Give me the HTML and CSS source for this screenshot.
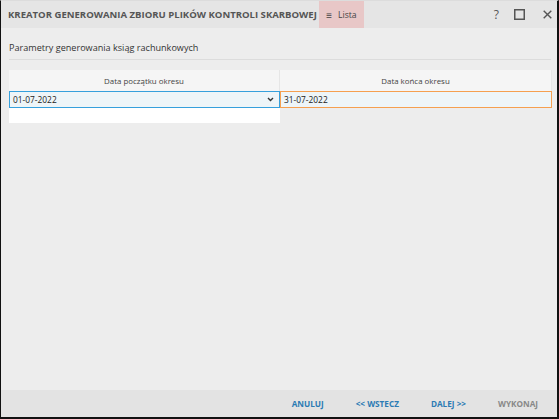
FILE: index.html
```html
<!DOCTYPE html>
<html lang="pl">
<head>
<meta charset="utf-8">
<link rel="stylesheet" href="styles.css">
</head>
<body>
<div class="window">
  <header class="titlebar">
    <div class="title">KREATOR GENEROWANIA ZBIORU PLIKÓW KONTROLI SKARBOWEJ</div>
    <div class="lista"><span class="burger">≡</span>Lista</div>
    <div class="spacer"></div>
    <div class="tools">
      <span class="help">?</span>
      <svg class="ico ico-max" width="11" height="11" viewBox="0 0 11 11"><rect x="0.75" y="0.75" width="9.5" height="9.5" fill="none" stroke="#555" stroke-width="1.5"/></svg>
      <svg class="ico ico-close" width="9" height="9" viewBox="0 0 9 9"><path d="M0.7 0.7L8.3 8.3M8.3 0.7L0.7 8.3" stroke="#555" stroke-width="1.4" fill="none"/></svg>
    </div>
  </header>
  <main class="content">
    <div class="section">Parametry generowania ksiąg rachunkowych</div>
    <div class="grid">
      <div class="head">Data początku okresu</div>
      <div class="head">Data końca okresu</div>
      <div class="cell cell-left"><span>01-07-2022</span>
        <svg width="7" height="5" viewBox="0 0 7 5"><path d="M1 1L3.5 3.5L6 1" stroke="#333" stroke-width="1.4" fill="none"/></svg>
      </div>
      <div class="cell cell-right"><span>31-07-2022</span></div>
      <div class="blank"></div>
    </div>
  </main>
  <footer class="footer">
    <span class="btn">ANULUJ</span>
    <span class="btn">&lt;&lt; WSTECZ</span>
    <span class="btn">DALEJ &gt;&gt;</span>
    <span class="btn disabled">WYKONAJ</span>
  </footer>
</div>
</body>
</html>
```
FILE: styles.css
```css
html, body {
  margin: 0;
  padding: 0;
  background: #000;
}
body {
  width: 559px;
  height: 419px;
  font-family: "Open Sans", "Noto Sans", sans-serif;
}
.window {
  box-sizing: border-box;
  width: 559px;
  height: 419px;
  border-left: 1px solid #111;
  border-right: 2px solid #111;
  border-bottom: 2px solid #111;
  border-top: 1px solid #dcdcdc;
  background: #ededed;
  display: flex;
  flex-direction: column;
}
.titlebar {
  height: 27px;
  background: #e5e5e5;
  display: flex;
  align-items: stretch;
  flex: none;
}
.title {
  padding-left: 7px;
  font-weight: 700;
  font-size: 9.55px;
  color: #555;
  display: flex;
  align-items: center;
  white-space: nowrap;
}
.lista {
  margin-left: 2px;
  width: 45px;
  background: #e8c7c7;
  display: flex;
  align-items: center;
  justify-content: center;
  font-size: 8.6px;
  color: #444;
  gap: 6px;
}
.burger { font-size: 10px; }
.spacer { flex: 1; }
.tools {
  display: flex;
  align-items: center;
  padding-right: 5px;
}
.help {
  font-size: 12px;
  color: #555;
}
.ico-max { margin-left: 15px; }
.ico-close { margin-left: 18px; }
.content {
  flex: 1;
  padding: 0 6px 0 8px;
}
.section {
  margin-top: 13px;
  font-size: 9.1px;
  color: #333;
  padding-bottom: 5px;
  border-bottom: 1px solid #dcdcdc;
}
.grid {
  margin-top: 10px;
  width: 543px;
  display: grid;
  grid-template-columns: 271px 272px;
}
.head {
  height: 21px;
  background: #f5f5f5;
  font-size: 7.9px;
  color: #444;
  display: flex;
  align-items: center;
  justify-content: center;
  border-right: 1px solid #e6e6e6;
}
.cell {
  box-sizing: border-box;
  height: 17px;
  background: #eef5f8;
  font-size: 8.4px;
  color: #222;
  display: flex;
  align-items: center;
  justify-content: space-between;
  padding: 0 5px 0 3px;
}
.cell-left { border: 1px solid #36a0dc; }
.cell-right { border: 1px solid #f5a050; }
.blank {
  height: 15px;
  background: #fff;
}
.footer {
  flex: none;
  height: 27px;
  background: #e3e3e3;
  display: flex;
  align-items: center;
  justify-content: flex-end;
  gap: 32px;
  padding-right: 19px;
  font-size: 8.2px;
  font-weight: 700;
}
.btn { color: #2c7bb4; }
.btn.disabled { color: #888; }
```
